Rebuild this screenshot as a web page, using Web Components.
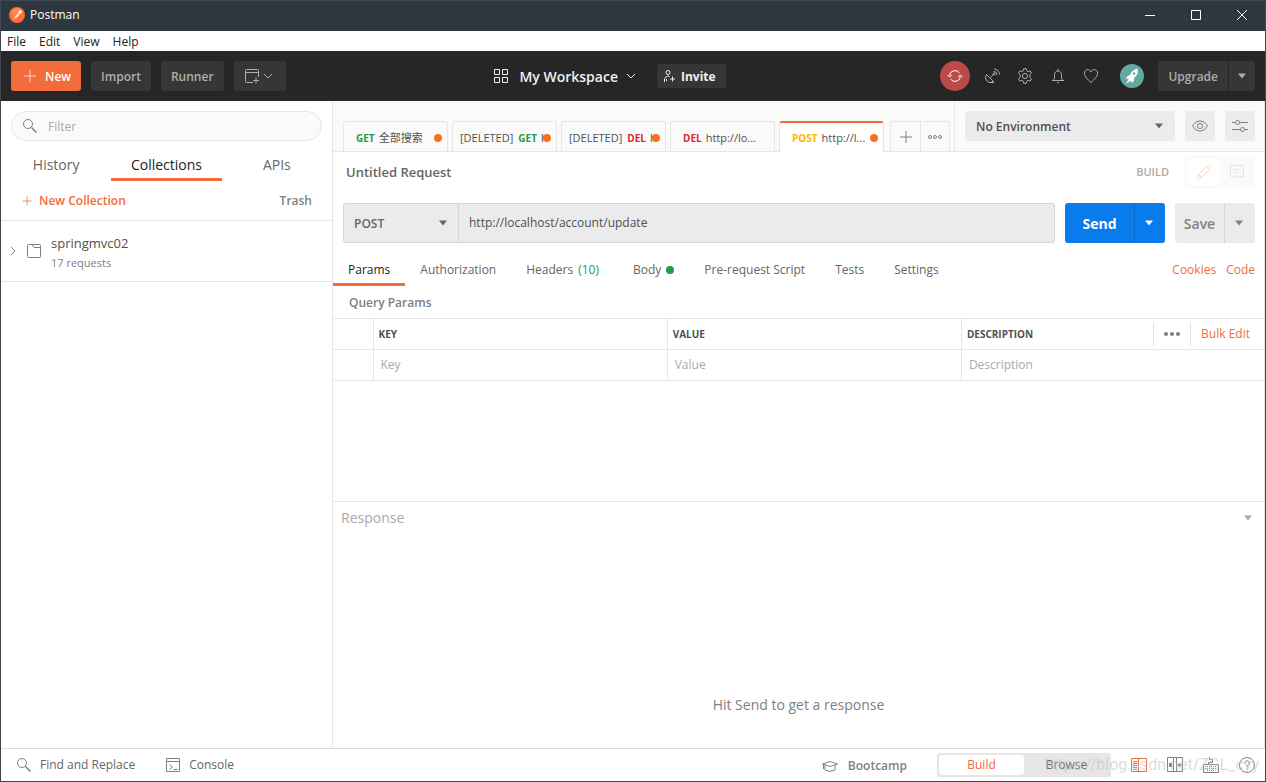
<!DOCTYPE html>
<html lang="en">
<head>
<meta charset="utf-8">
<title>Postman</title>
<style>
  body {
    margin: 0;
    font-family: "Open Sans", "Noto Sans CJK SC", sans-serif;
    font-size: 12px;
    line-height: 16px;
    color: #505050;
    --orange: #f26b3a;
    --line: #e6e6e6;
    --grey: #808080;
    --soft: #fafafa;
    --control: #ebebeb;
  }
</style>
</head>
<body>
<app-window>
  <title-bar slot="top">Postman</title-bar>
  <menu-bar slot="top"></menu-bar>
  <header-bar slot="top"></header-bar>
  <side-bar slot="side"></side-bar>
  <tab-strip>
    <request-tab method="GET" unsaved>全部搜索</request-tab>
    <request-tab method="GET" deleted unsaved>h</request-tab>
    <request-tab method="DEL" deleted unsaved>h</request-tab>
    <request-tab method="DEL">http://lo...</request-tab>
    <request-tab method="POST" active unsaved>http://l...</request-tab>
    <environment-bar slot="environment"></environment-bar>
  </tab-strip>
  <request-builder>
    <params-table></params-table>
  </request-builder>
  <response-pane>Hit Send to get a response</response-pane>
  <status-bar slot="bottom"></status-bar>
</app-window>

<script>
const ICONS = {
  logo: `<circle cx="8" cy="8" r="8" fill="#ff6c37" stroke="none"/><path d="M2 5a7 7 0 0 1 11-2L5 11z" fill="#ff8a50" stroke="none"/><path d="M3.800 12.300l2-2.600 3.900-3.900 1.500 1.500-3.800 3.800z" fill="#ffd9c9" stroke="none"/><circle cx="11.200" cy="4.900" r="1.700" fill="#fff" stroke="none"/>`,
  minimize: `<path d="M3 8.500h10"/>`,
  maximize: `<path d="M3.500 3.500h9v9h-9z"/>`,
  close: `<path d="M3 3l10 10M13 3L3 13"/>`,
  plus: `<path d="M8 2v12M2 8h12"/>`,
  window: `<path d="M9 14.500H2.500a1 1 0 0 1-1-1v-11a1 1 0 0 1 1-1h11a1 1 0 0 1 1 1V9M1.500 4.500h13M12 9.500v6M9 12.500h6"/>`,
  chevron: `<path d="M4 6l4 4 4-4"/>`,
  right: `<path d="M6 4l4 4-4 4"/>`,
  grid: `<path d="M1.500 1.500h5v5h-5zM9.500 1.500h5v5h-5zM1.500 9.500h5v5h-5zM9.500 9.500h5v5h-5z"/>`,
  invite: `<circle cx="7" cy="4.500" r="2"/><path d="M3.500 14v-2a3.500 3.500 0 0 1 5-3.500M5.500 11v2M11.500 8.500v5M9 11h5"/>`,
  sync: `<path d="M2.500 7.500A5.500 5.500 0 0 1 12.500 5M13.500 8.500A5.500 5.500 0 0 1 3.500 11"/><path d="M.5 7l2 2 2.500-2M11 9l2.500-2 2 2"/>`,
  satellite: `<path d="M2.500 6.500a5 5 0 0 0 7 7zM6.500 9.500l3-3M5 14.500h5"/><circle cx="10" cy="6" r="1"/><path d="M9.500 3.500a3.500 3.500 0 0 1 3.500 3.500M10 1a5.500 5.500 0 0 1 5.500 5.500"/>`,
  gear: `<circle cx="8" cy="8" r="2.600"/><path d="M6.700.7h2.600l.4 2.100 1.400.8 2-.8 1.400 2.300-1.600 1.500v2.800l1.600 1.500-1.400 2.300-2-.8-1.400.8-.4 2.100H6.700l-.4-2.100-1.400-.8-2 .8-1.400-2.300 1.600-1.500V6.600L1.500 5.100l1.400-2.300 2 .8 1.400-.8z"/>`,
  bell: `<path d="M2 12.500h12M3.500 12.500c1-1.500 1-3 1-5a3.500 4.500 0 0 1 7 0c0 2 0 3.500 1 5M7 14.500q1 1 2 0M8 3V1"/>`,
  heart: `<path d="M8 14.500C5 11.500 1.500 8.800 1.500 5.200c0-4 5-5 6.500-1.200 1.500-3.800 6.500-2.800 6.500 1.200 0 3.600-3.500 6.300-6.500 9.300z"/>`,
  rocket: `<path d="M13.500.5C9.500 1.500 7 4 6 7L3.500 8 1.800 11l2.700-.6-.5 2-2.200 3.100 3.600-1.700 1.800-1 .6 2.500 2.300-2.800-.1-2.500C13 8 14.500 5 13.500.5z" fill="#fff" stroke="none"/><circle cx="10" cy="5.500" r="1.200" fill="#62aa9f" stroke="none"/>`,
  search: `<circle cx="6" cy="6" r="4.500"/><path d="M9.500 9.500l5 5" stroke-width="1.500"/>`,
  folder: `<path d="M2.500 1.500H6l2 3h6.500v9a1 1 0 0 1-1 1h-11a1 1 0 0 1-1-1v-11a1 1 0 0 1 1-1zM6 1.500h7.500a1 1 0 0 1 1 1v2"/>`,
  more: `<circle cx="3" cy="8" r="1.500"/><circle cx="8" cy="8" r="1.500"/><circle cx="13" cy="8" r="1.500"/>`,
  dots: `<g fill="currentColor" stroke="none"><circle cx="2" cy="8" r="2"/><circle cx="8" cy="8" r="2"/><circle cx="14" cy="8" r="2"/></g>`,
  caret: `<path d="M4 5.500h8l-4 5z" fill="currentColor" stroke="none"/>`,
  eye: `<path d="M.5 8Q3.500 2.800 8 2.800T15.500 8Q12.500 13.200 8 13.200T.5 8z"/><circle cx="8" cy="8" r="2.600"/>`,
  sliders: `<path d="M0 4.500h3.500M7.500 4.500H16M0 11.500h8.500M12.500 11.500H16"/><circle cx="5.500" cy="4.500" r="2"/><circle cx="10.500" cy="11.500" r="2"/>`,
  pencil: `<path d="M1.500 14.500l1-4 8-8q2-2 3.500-.5t-.5 3.500l-8 8zM10 3l3 3M2.500 10.500l3 3"/>`,
  comment: `<path d="M1.500 1.500h13v11H8l-2 2v-2H1.500zM4 5.500h8M4 8.500h5"/>`,
  console: `<path d="M1.500 1.500h13v13h-13zM1.500 4.500h13M4.500 7.500l3 2.500-3 2.500M8.500 12.500h4"/>`,
  cap: `<path d="M8 3.500L.5 6 8 8.500 15.500 6zM3 7v5q5 3 10 0V7M1.500 6.500V11"/>`,
  sidebar: `<path d="M.5 1.500h15v13H.5zM7.500 1.500v13M2 4.500h4M2 6.500h4M2 8.500h4M2 10.500h4M2 12.500h4"/>`,
  split: `<path d="M.5 .5h6v14h-6zM9.500 .5h6v14h-6zM6.500 .5h3M6.500 14.500h3"/><path d="M2 6h3v4H2zM10.500 8l2-2 2 2-2 2z" fill="currentColor" stroke="none"/>`,
  keyboard: `<path d="M.5 7.500h15v8H.5zM5.500 7V5.500h4v-3h-3V0"/><path d="M2 9.500h12M2 11.500h12M4 13.500h8" stroke-dasharray="1 1"/>`,
  help: `<circle cx="8" cy="8" r="7.500"/><path d="M5.800 6.200C5.800 3 10.300 3.200 10.300 6c0 1.700-2.300 1.900-2.300 4M8 11.500v1"/>`
};

// shared by every element that draws buttons, links or fields
const RESET = `
  *, :host { box-sizing: border-box; }
  button, input, select { margin: 0; padding: 0; border: 0; border-radius: 0; background: none; font: inherit; color: inherit; appearance: none; outline: 0; }
  button { display: flex; align-items: center; justify-content: center; }
  a { color: inherit; text-decoration: none; }
`;

class BaseElement extends HTMLElement {
  constructor() {
    super();
    this.attachShadow({ mode: "open" });
  }

  connectedCallback() {
    const template = document.createElement("template");
    template.innerHTML = `<style>${RESET}${this.styles()}</style>${this.markup()}`;
    this.shadowRoot.replaceChildren(template.content.cloneNode(true));
  }
}

class UiIcon extends BaseElement {
  styles() {
    const size = this.getAttribute("size") || 16;
    return `
      :host { display: block; flex: none; width: ${size}px; height: ${size}px; }
      svg { display: block; width: 100%; height: 100%; }
    `;
  }

  markup() {
    return `<svg viewBox="0 0 16 16" fill="none" stroke="currentColor" aria-hidden="true">${ICONS[this.getAttribute("name")]}</svg>`;
  }
}

class AppWindow extends BaseElement {
  styles() {
    return `
      :host { display: flex; flex-direction: column; min-height: 100vh; border: 1px solid #3d4852; background: #fff; }
      .body { flex: 1; display: grid; grid-template-columns: 332px minmax(0, 1fr); }
      main { display: grid; grid-template-rows: auto 24fr 17fr; border-right: 1px solid var(--line); }
    `;
  }

  markup() {
    return `
      <slot name="top"></slot>
      <div class="body">
        <slot name="side"></slot>
        <main><slot></slot></main>
      </div>
      <slot name="bottom"></slot>
    `;
  }
}

class TitleBar extends BaseElement {
  styles() {
    return `
      :host { display: flex; align-items: center; height: 30px; padding-left: 8px; background: #2d3740; color: #fff; }
      ui-icon, span { margin-bottom: 2px; }
      button ui-icon { margin: 0; }
      span { flex: 1; margin-left: 5px; }
      button { width: 46px; height: 30px; padding-bottom: 2px; }
    `;
  }

  markup() {
    return `
      <ui-icon name="logo"></ui-icon>
      <span><slot></slot></span>
      <button aria-label="Minimize"><ui-icon name="minimize"></ui-icon></button>
      <button aria-label="Maximize"><ui-icon name="maximize"></ui-icon></button>
      <button aria-label="Close"><ui-icon name="close"></ui-icon></button>
    `;
  }
}

class MenuBar extends BaseElement {
  styles() {
    return `
      :host { display: flex; gap: 13px; height: 20px; padding: 2px 6px 0; color: #222; align-items: center; }
    `;
  }

  markup() {
    return ["File", "Edit", "View", "Help"].map((item) => `<button>${item}</button>`).join("");
  }
}

class HeaderBar extends BaseElement {
  styles() {
    return `
      :host { display: flex; align-items: center; justify-content: space-between; height: 50px; padding: 0 10px; background: #262626; color: #aeaeae; font-weight: 600; }
      .group { display: flex; align-items: center; gap: 10px; }
      .group button { height: 30px; padding: 2px 10px 0; border-radius: 3px; background: #363636; }
      .group .new { gap: 7px; padding-left: 11px; background: var(--orange); color: #fff; }
      button ui-icon { margin-bottom: 2px; }
      .new ui-icon { opacity: 0.7; }
      .group .workspace { gap: 5px; padding: 2px 0 0; background: none; color: #f0f0f0; font-size: 14px; }
      .workspace ui-icon:first-child { margin-right: 5px; }
      .group .invite { height: 24px; gap: 4px; padding-left: 4px; color: #f0f0f0; font-weight: 700; }
      .middle { gap: 18px; }
      .right { gap: 14px; padding-left: 7px; }
      .group .plain { padding: 2px 0 0; background: none; }
      .group .sync { width: 30px; border-radius: 50%; background: #bb4a48; color: #fff; padding: 2px 0 0; }
      .icons { display: flex; gap: 17px; align-items: center; }
      .group .avatar { width: 24px; height: 24px; margin-left: 7px; padding: 2px 0 0; border-radius: 50%; background: #62aa9f; }
      .split { display: flex; gap: 1px; }
      .split button:first-child { border-radius: 3px 0 0 3px; }
      .split button:last-child { width: 26px; padding: 2px 0 0; border-radius: 0 3px 3px 0; }
    `;
  }

  markup() {
    return `
      <div class="group">
        <button class="new"><ui-icon name="plus"></ui-icon>New</button>
        <button>Import</button>
        <button>Runner</button>
        <button aria-label="Open new window"><ui-icon name="window"></ui-icon><ui-icon name="chevron"></ui-icon></button>
      </div>
      <div class="group middle">
        <button class="workspace"><ui-icon name="grid"></ui-icon>My Workspace<ui-icon name="chevron"></ui-icon></button>
        <button class="invite"><ui-icon name="invite"></ui-icon>Invite</button>
      </div>
      <div class="group right">
        <button class="sync" aria-label="Sync"><ui-icon name="sync"></ui-icon></button>
        <div class="icons">
          <button class="plain" aria-label="Capture requests"><ui-icon name="satellite"></ui-icon></button>
          <button class="plain" aria-label="Settings"><ui-icon name="gear"></ui-icon></button>
          <button class="plain" aria-label="Notifications"><ui-icon name="bell"></ui-icon></button>
          <button class="plain" aria-label="Favourites"><ui-icon name="heart"></ui-icon></button>
        </div>
        <button class="avatar" aria-label="Account"><ui-icon name="rocket"></ui-icon></button>
        <div class="split">
          <button>Upgrade</button>
          <button aria-label="Upgrade options"><ui-icon name="caret"></ui-icon></button>
        </div>
      </div>
    `;
  }
}

class SideBar extends BaseElement {
  styles() {
    return `
      :host { display: block; border-right: 1px solid var(--line); }
      .filter { display: flex; align-items: center; gap: 10px; height: 30px; margin: 10px 10px 0; padding: 0 10px; border: 1px solid var(--line); border-radius: 15px; background: var(--soft); color: var(--grey); }
      .filter input { flex: 1; min-width: 0; padding-top: 2px; }
      ::placeholder { color: #a9a9a9; opacity: 1; }
      nav { display: grid; grid-template-columns: repeat(3, 1fr); height: 40px; }
      nav button { padding-top: 10px; border-bottom: 3px solid transparent; font-size: 14px; color: #666; }
      nav .active { border-color: var(--orange); color: #222; }
      .actions { display: flex; align-items: center; justify-content: space-between; height: 40px; padding: 0 20px; border-bottom: 1px solid var(--line); font-weight: 600; color: var(--grey); }
      .actions button:first-child { gap: 6px; color: var(--orange); }
      .collection { display: grid; grid-template-columns: auto auto 1fr; align-items: center; height: 61px; padding: 0 4px; border-bottom: 1px solid var(--line); color: var(--grey); }
      .collection ui-icon:nth-child(2) { margin: 0 9px 0 5px; }
      .collection div { padding-top: 3px; }
      h3, p { margin: 0; font-weight: 400; }
      h3 { font-size: 13px; line-height: 20px; color: #505050; }
      p { font-size: 11px; line-height: 20px; }
    `;
  }

  markup() {
    return `
      <label class="filter"><ui-icon name="search"></ui-icon><input type="text" placeholder="Filter" aria-label="Filter"></label>
      <nav>
        <button>History</button>
        <button class="active">Collections</button>
        <button>APIs</button>
      </nav>
      <div class="actions">
        <button><ui-icon name="plus" size="12"></ui-icon>New Collection</button>
        <button>Trash</button>
      </div>
      <div class="collection">
        <ui-icon name="right"></ui-icon>
        <ui-icon name="folder"></ui-icon>
        <div>
          <h3>springmvc02</h3>
          <p>17 requests</p>
        </div>
      </div>
    `;
  }
}

class TabStrip extends BaseElement {
  styles() {
    return `
      :host { display: flex; height: 51px; border-bottom: 1px solid var(--line); background: var(--soft); }
      .tabs { flex: 1; display: flex; align-items: flex-end; gap: 4px; padding-left: 10px; min-width: 0; margin-bottom: -1px; }
      .tools { display: flex; margin: 0 0 1px 2px; border: 1px solid var(--line); border-bottom: 0; border-radius: 3px 3px 0 0; color: var(--grey); }
      .tools button { width: 29px; height: 29px; }
      .tools button:last-child { border-left: 1px solid var(--line); }
    `;
  }

  markup() {
    return `
      <div class="tabs">
        <slot></slot>
        <div class="tools">
          <button aria-label="New tab"><ui-icon name="plus"></ui-icon></button>
          <button aria-label="Tab options"><ui-icon name="more"></ui-icon></button>
        </div>
      </div>
      <slot name="environment"></slot>
    `;
  }
}

class RequestTab extends BaseElement {
  styles() {
    const colors = { GET: "#259b48", DEL: "#e0282e", POST: "#ffb400" };
    return `
      :host { display: block; flex: 0 1 105px; min-width: 0; }
      button { width: 100%; height: 30px; padding: 2px 5px 0 12px; justify-content: flex-start; border: 1px solid var(--line); border-bottom: 0; border-radius: 3px 3px 0 0; font-size: 11px; margin-bottom: 1px; }
      :host([deleted]) button { padding-left: 7px; }
      :host([active]) button { height: 31px; margin: 0; padding-top: 0; border-top: 2px solid var(--orange); background: #fff; }
      b { margin-right: 4px; font-size: 10px; color: ${colors[this.getAttribute("method")]}; }
      .deleted { margin-right: 5px; }
      .name { flex: 1; min-width: 0; overflow: hidden; white-space: nowrap; text-align: left; }
      i { flex: none; width: 8px; height: 8px; margin-left: -3px; border-radius: 50%; background: #f76f20; z-index: 1; }
    `;
  }

  markup() {
    return `
      <button>
        ${this.hasAttribute("deleted") ? `<span class="deleted">[DELETED]</span>` : ""}
        <b>${this.getAttribute("method")}</b>
        <span class="name"><slot></slot></span>
        ${this.hasAttribute("unsaved") ? "<i></i>" : ""}
      </button>
    `;
  }
}

class EnvironmentBar extends BaseElement {
  styles() {
    return `
      :host { display: flex; flex: none; gap: 10px; padding: 10px 9px 0 10px; border-left: 1px solid var(--line); }
      .select { display: grid; grid-template-columns: 1fr auto; align-items: center; width: 210px; height: 30px; }
      select { grid-area: 1 / 1 / 2 / 3; height: 30px; padding: 2px 11px 0; border-radius: 3px; background: var(--control); font-weight: 600; }
      .select ui-icon { grid-area: 1 / 2; margin-right: 8px; pointer-events: none; color: #666; }
      button { width: 30px; height: 30px; border-radius: 3px; background: var(--control); color: var(--grey); }
    `;
  }

  markup() {
    return `
      <div class="select">
        <select aria-label="Environment"><option>No Environment</option></select>
        <ui-icon name="caret"></ui-icon>
      </div>
      <button aria-label="Environment quick look"><ui-icon name="eye"></ui-icon></button>
      <button aria-label="Manage environments"><ui-icon name="sliders"></ui-icon></button>
    `;
  }
}

class RequestBuilder extends BaseElement {
  styles() {
    return `
      :host { display: block; }
      .title { display: flex; align-items: center; height: 40px; padding: 0 9px 0 13px; }
      h2 { flex: 1; margin: 0; font-size: 13px; font-weight: 600; color: #666; }
      .mode { font-size: 11px; font-weight: 600; color: #a9a9a9; }
      .toggle { display: flex; margin-left: 16px; padding: 2px; border-radius: 3px; background: var(--soft); }
      .toggle button { width: 33px; height: 28px; border-radius: 3px; color: #e6e6e6; }
      .toggle .on { background: #fff; color: #fbd3c4; }
      .request { display: flex; gap: 10px; margin: 11px 9px 0 10px; }
      .url { flex: 1; display: grid; grid-template-columns: 115px 1fr; height: 40px; border: 1px solid #d4d4d4; border-radius: 3px; background: var(--control); }
      .method { display: grid; grid-template-columns: 1fr auto; align-items: center; border-right: 1px solid #d4d4d4; }
      .method select { grid-area: 1 / 1 / 2 / 3; height: 38px; padding: 2px 10px 0; font-weight: 600; color: #666; }
      .method ui-icon { grid-area: 1 / 2; margin-right: 7px; pointer-events: none; color: #666; }
      .url input { padding: 0 10px; }
      .split { display: flex; border-radius: 3px; overflow: hidden; background: #097bed; color: #fff; font-size: 14px; font-weight: 700; }
      .split button { padding-top: 2px; }
      .split button:first-child { width: 69px; }
      .split button:last-child { width: 31px; padding: 0 2px 0 0; border-left: 1px solid #0869cb; }
      .save { background: var(--control); color: var(--grey); font-weight: 600; }
      .save button:first-child { width: 49px; }
      .save button:last-child { border-color: #d4d4d4; }
      .sections { display: flex; align-items: center; height: 43px; }
      nav { flex: 1; display: flex; height: 43px; }
      nav button { gap: 5px; padding: 19px 15px 0; align-items: flex-start; border-bottom: 3px solid transparent; color: #666; white-space: nowrap; }
      nav .active { border-color: var(--orange); color: #222; }
      em { margin-right: 4px; font-style: normal; color: #259b48; }
      i { width: 8px; height: 8px; margin: 4px 0 0; border-radius: 50%; background: #259b48; }
      .links { display: flex; gap: 10px; padding: 11px 9px 0 0; color: var(--orange); }
    `;
  }

  markup() {
    return `
      <div class="title">
        <h2>Untitled Request</h2>
        <span class="mode">BUILD</span>
        <div class="toggle">
          <button class="on" aria-label="Edit"><ui-icon name="pencil"></ui-icon></button>
          <button aria-label="Comments"><ui-icon name="comment"></ui-icon></button>
        </div>
      </div>
      <div class="request">
        <div class="url">
          <div class="method">
            <select aria-label="Method"><option>POST</option></select>
            <ui-icon name="caret"></ui-icon>
          </div>
          <input type="text" value="http://localhost/account/update" aria-label="Request URL">
        </div>
        <div class="split">
          <button>Send</button>
          <button aria-label="Send options"><ui-icon name="caret"></ui-icon></button>
        </div>
        <div class="split save">
          <button>Save</button>
          <button aria-label="Save options"><ui-icon name="caret"></ui-icon></button>
        </div>
      </div>
      <div class="sections">
        <nav>
          <button class="active">Params</button>
          <button>Authorization</button>
          <button>Headers <em>(10)</em></button>
          <button>Body <i></i></button>
          <button>Pre-request Script</button>
          <button>Tests</button>
          <button>Settings</button>
        </nav>
        <div class="links"><a href="#cookies">Cookies</a><a href="#code">Code</a></div>
      </div>
      <slot></slot>
    `;
  }
}

class ParamsTable extends BaseElement {
  styles() {
    return `
      :host { display: block; }
      h4 { margin: 0; padding: 9px 16px 7px; font-weight: 600; color: var(--grey); }
      table { width: 100%; border-collapse: collapse; table-layout: fixed; }
      col:first-child { width: 40px; }
      .field { width: 31.6%; }
      th, td { height: 31px; padding: 0 5px; border: solid var(--line); border-width: 1px 0; text-align: left; }
      th + th, td + td { border-left-width: 1px; }
      th { font-size: 10px; font-weight: 700; }
      .last { display: flex; align-items: center; }
      .last span { flex: 1; }
      .last button { height: 24px; padding: 0 10px; border-left: 1px solid var(--line); font-size: 12px; font-weight: 400; color: var(--grey); }
      .last button:last-child { color: var(--orange); padding-right: 9px; }
      td input { display: block; width: 100%; padding: 0 2px; }
      ::placeholder { color: #a9a9a9; opacity: 1; }
    `;
  }

  markup() {
    return `
      <h4>Query Params</h4>
      <table>
        <colgroup><col><col class="field"><col class="field"><col></colgroup>
        <thead>
          <tr>
            <th></th>
            <th>KEY</th>
            <th>VALUE</th>
            <th>
              <div class="last">
                <span>DESCRIPTION</span>
                <button aria-label="Columns"><ui-icon name="dots"></ui-icon></button>
                <button>Bulk Edit</button>
              </div>
            </th>
          </tr>
        </thead>
        <tbody>
          <tr>
            <td></td>
            <td><input type="text" placeholder="Key" aria-label="Key"></td>
            <td><input type="text" placeholder="Value" aria-label="Value"></td>
            <td><input type="text" placeholder="Description" aria-label="Description"></td>
          </tr>
        </tbody>
      </table>
    `;
  }
}

class ResponsePane extends BaseElement {
  styles() {
    return `
      :host { display: flex; flex-direction: column; border-top: 1px solid var(--line); font-size: 14px; }
      header { display: flex; align-items: center; justify-content: space-between; height: 32px; padding: 0 8px; color: #a9a9a9; }
      p { margin: auto 0 31px; line-height: 24px; text-align: center; color: var(--grey); }
    `;
  }

  markup() {
    return `
      <header>Response<button aria-label="Collapse response"><ui-icon name="caret"></ui-icon></button></header>
      <p><slot></slot></p>
    `;
  }
}

class StatusBar extends BaseElement {
  styles() {
    return `
      :host { display: flex; align-items: center; position: relative; height: 33px; padding: 0 10px 0 15px; border-top: 1px solid #dcdcdc; color: #666; }
      button { gap: 8px; }
      ui-icon { color: var(--grey); }
      .console { margin-left: 30px; }
      .bootcamp { gap: 10px; margin-left: auto; padding-top: 2px; font-weight: 600; color: var(--grey); }
      .toggle { display: flex; height: 24px; margin: 0 20px 0 30px; padding: 2px; border-radius: 3px; background: #e6e6e6; }
      .toggle button { width: 85px; border-radius: 3px; }
      .toggle .on { background: #fff; color: var(--orange); }
      .panes { display: flex; gap: 20px; }
      .panes .on ui-icon { color: var(--orange); }
      .mark { position: absolute; right: 6px; top: 4px; font: 16px/24px Roboto, sans-serif; color: #b4b4b4; opacity: 0.45; text-shadow: 0 0 1px #fff; pointer-events: none; }
    `;
  }

  markup() {
    return `
      <button><ui-icon name="search"></ui-icon>Find and Replace</button>
      <button class="console"><ui-icon name="console"></ui-icon>Console</button>
      <button class="bootcamp"><ui-icon name="cap"></ui-icon>Bootcamp</button>
      <div class="toggle"><button class="on">Build</button><button>Browse</button></div>
      <div class="panes">
        <button class="on" aria-label="Sidebar"><ui-icon name="sidebar"></ui-icon></button>
        <button aria-label="Two pane view"><ui-icon name="split"></ui-icon></button>
        <button aria-label="Keyboard shortcuts"><ui-icon name="keyboard"></ui-icon></button>
        <button aria-label="Help"><ui-icon name="help"></ui-icon></button>
      </div>
      <span class="mark">https://blog.csdn.net/ZGL_cyy</span>
    `;
  }
}

customElements.define("ui-icon", UiIcon);
customElements.define("app-window", AppWindow);
customElements.define("title-bar", TitleBar);
customElements.define("menu-bar", MenuBar);
customElements.define("header-bar", HeaderBar);
customElements.define("side-bar", SideBar);
customElements.define("tab-strip", TabStrip);
customElements.define("request-tab", RequestTab);
customElements.define("environment-bar", EnvironmentBar);
customElements.define("request-builder", RequestBuilder);
customElements.define("params-table", ParamsTable);
customElements.define("response-pane", ResponsePane);
customElements.define("status-bar", StatusBar);
</script>
</body>
</html>
